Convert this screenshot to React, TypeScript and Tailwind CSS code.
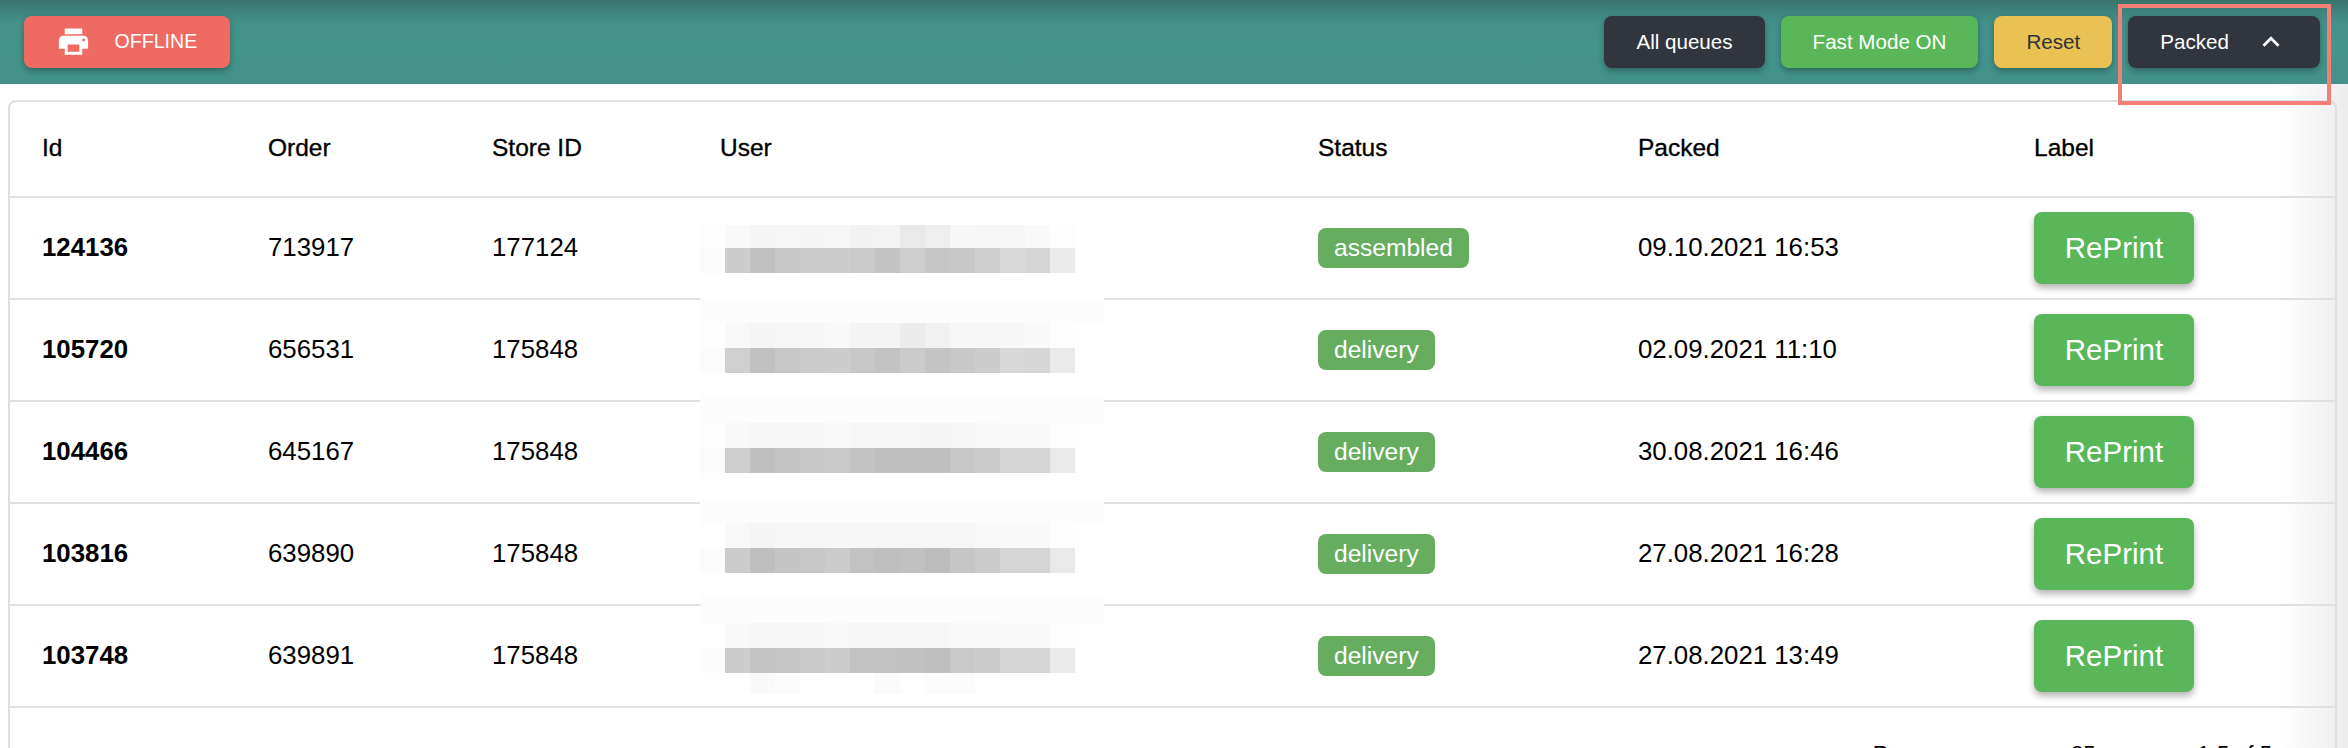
const rows = [
  { id: "124136", order: "713917", store: "177124", status: "assembled", packed: "09.10.2021 16:53" },
  { id: "105720", order: "656531", store: "175848", status: "delivery", packed: "02.09.2021 11:10" },
  { id: "104466", order: "645167", store: "175848", status: "delivery", packed: "30.08.2021 16:46" },
  { id: "103816", order: "639890", store: "175848", status: "delivery", packed: "27.08.2021 16:28" },
  { id: "103748", order: "639891", store: "175848", status: "delivery", packed: "27.08.2021 13:49" },
];

const cols = "grid grid-cols-[226px_224px_228px_598px_320px_396px_1fr] items-center";
const headers = ["Id", "Order", "Store ID", "User", "Status", "Packed", "Label"];

// mosaic strips: [y, height, grey levels per 25px column]
const strips: [number, number, number[]][] = [
  [225, 23, [253, 249, 245, 246, 245, 246, 242, 243, 233, 238, 247, 246, 246, 249, 253]],
  [248, 25, [251, 205, 193, 199, 204, 205, 202, 195, 206, 198, 200, 206, 217, 213, 235]],
  [323, 25, [253, 248, 245, 246, 246, 248, 244, 244, 236, 241, 247, 247, 247, 249, 253]],
  [348, 25, [251, 207, 193, 199, 203, 205, 199, 195, 203, 196, 200, 205, 216, 214, 234]],
  [423, 25, [253, 248, 246, 247, 247, 248, 246, 246, 246, 245, 246, 248, 249, 249, 253]],
  [448, 25, [251, 206, 191, 196, 200, 201, 195, 191, 192, 191, 199, 204, 214, 212, 233]],
  [523, 25, [254, 248, 245, 246, 246, 247, 247, 246, 246, 246, 246, 248, 249, 249, 253]],
  [548, 25, [251, 204, 191, 197, 199, 203, 194, 191, 193, 189, 198, 203, 212, 212, 233]],
  [623, 25, [254, 249, 247, 247, 246, 248, 247, 247, 247, 246, 248, 248, 249, 249, 253]],
  [648, 25, [252, 205, 196, 198, 201, 204, 194, 194, 193, 191, 201, 205, 213, 213, 233]],
  [673, 21, [254, 254, 249, 252, 254, 254, 254, 250, 254, 252, 251, 254, 254, 254, 254]],
];

function Mosaic() {
  return (
    <svg className="absolute left-[700px] top-[198px]" width="404" height="500" viewBox="700 198 404 500" shapeRendering="crispEdges">
      <rect x="700" y="296" width="404" height="398" fill="#fefefe" />
      {[298, 398, 498, 598].map((y) => (
        <rect key={y} x="700" y={y} width="404" height="25" fill="#fcfcfc" />
      ))}
      {strips.map(([y, h, vals]) =>
        vals.map((v, i) => (
          <rect key={`${y}-${i}`} x={700 + i * 25} y={y} width="25" height={h} fill={`rgb(${v},${v},${v})`} />
        ))
      )}
    </svg>
  );
}

function Btn({ className, children }: { className: string; children: React.ReactNode }) {
  return (
    <button className={`h-[52px] rounded-lg px-8 text-[20.6px] shadow-[0_3px_6px_rgba(0,0,0,0.3)] flex items-center ${className}`}>
      {children}
    </button>
  );
}

export default function App() {
  return (
    <div className="relative h-[748px] w-[2348px] overflow-hidden bg-white text-black [font-family:'Liberation_Sans',Arial,sans-serif]">
      <header className="flex h-[84px] items-center justify-between pl-6 pr-7 bg-[linear-gradient(180deg,#39736c_0px,#43918a_22px,#44958a_45px,#43928a_84px)]">
        <Btn className="bg-[#ef6a62] text-white gap-6 pl-8 w-[206px]">
          <svg viewBox="0 0 24 24" width="35" height="35" fill="white" className="-ml-[0.5px] -mt-[1px] shrink-0">
            <path d="M19 8H5c-1.66 0-3 1.34-3 3v6h4v4h12v-4h4v-6c0-1.66-1.34-3-3-3zm-3 11H8v-5h8v5zm3-7c-.55 0-1-.45-1-1s.45-1 1-1 1 .45 1 1-.45 1-1 1zm-1-9H6v4h12V3z" />
          </svg>
          <span className="text-[19.6px]">OFFLINE</span>
        </Btn>
        <div className="flex gap-4">
          <Btn className="bg-[#31353d] text-white">All queues</Btn>
          <Btn className="bg-[#59b75a] text-white">Fast Mode ON</Btn>
          <Btn className="bg-[#eac153] text-[#2f3339]">Reset</Btn>
          <Btn className="bg-[#31353d] text-white gap-[25px] pr-8">
            <span>Packed</span>
            <svg viewBox="0 0 24 24" width="34" height="34" fill="white" className="shrink-0">
              <path d="M12 8l-6 6 1.41 1.41L12 10.83l4.59 4.58L18 14z" />
            </svg>
          </Btn>
        </div>
      </header>

      <main className="mt-4 ml-2 mr-[11px] rounded-lg border-2 border-[#dcdfe3] bg-white">
        <div className={`${cols} h-[96px] border-b-2 border-[#e0e0e0] text-[24.5px] [-webkit-text-stroke:0.35px_black]`}>
          {headers.map((h) => (
            <div key={h} className="pl-[32px] pb-[2px]">
              {h}
            </div>
          ))}
        </div>
        {rows.map((r) => (
          <div key={r.id} className={`${cols} h-[102px] border-b-2 border-[#e0e0e0] text-[25.8px]`}>
            <div className="pl-[32px] pb-[2px] font-bold">{r.id}</div>
            <div className="pl-[32px] pb-[2px]">{r.order}</div>
            <div className="pl-[32px] pb-[2px]">{r.store}</div>
            <div />
            <div className="pl-[32px]">
              <span className="inline-flex h-10 items-center rounded-lg bg-[#67ad5f] px-4 text-[24.6px] text-white">{r.status}</span>
            </div>
            <div className="pl-[32px] pb-[2px]">{r.packed}</div>
            <div className="pl-[32px]">
              <button className="h-[72px] w-40 rounded-lg bg-[#59b75a] text-[29.5px] text-white shadow-[0_4px_7px_rgba(0,0,0,0.3)]">RePrint</button>
            </div>
          </div>
        ))}
        <div className="flex justify-end pt-[33px] pr-[63px] text-[22px] leading-[26px]">
          <span>Rows per page:</span>
          <span className="ml-[44px]">25</span>
          <span className="ml-[102px]">1-5 of 5</span>
        </div>
      </main>

      <Mosaic />

      <div className="pointer-events-none absolute right-0 top-[84px] bottom-0 w-[72px] bg-[linear-gradient(90deg,rgba(225,225,225,0),rgba(225,225,225,0.6))]" />
      <div className="pointer-events-none absolute left-[2118px] top-1 h-[101px] w-[213px] border-4 border-[#f47f78]" />
    </div>
  );
}
